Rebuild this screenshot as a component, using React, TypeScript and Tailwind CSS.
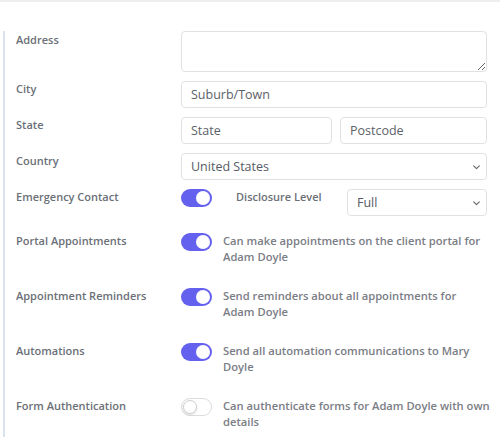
import React from "react";

const Chevron: React.FC = () => (
  <svg
    className="pointer-events-none absolute right-[6px] top-1/2 h-[9px] w-[9px] -translate-y-1/2 text-[#666]"
    viewBox="0 0 16 16"
    fill="none"
    stroke="currentColor"
    strokeWidth={2}
    strokeLinecap="round"
    strokeLinejoin="round"
  >
    <path d="M3 6l5 5 5-5" />
  </svg>
);

const Toggle: React.FC<{ on?: boolean }> = ({ on = false }) => (
  <div
    className={
      on
        ? "relative h-[18px] w-[31px] shrink-0 rounded-full bg-[#6461ef]"
        : "relative h-[18px] w-[31px] shrink-0 rounded-full border border-[#dcdcdc] bg-white"
    }
  >
    <div
      className={
        on
          ? "absolute right-[2px] top-[2px] h-[14px] w-[14px] rounded-full bg-white"
          : "absolute left-[1px] top-[1px] h-[14px] w-[14px] rounded-full border border-[#cfcfcf] bg-white shadow-sm"
      }
    />
  </div>
);

const baseInput =
  "block h-[27px] min-w-0 rounded-[4px] border border-[#dfe1e4] bg-white px-[9px] text-[12.5px] leading-[16px] text-[#555b63] placeholder:text-[#5c6168] outline-none";

const Label: React.FC<{ children: React.ReactNode }> = ({ children }) => (
  <div className="text-[11px] font-semibold leading-[16px] text-[#6b7077]">{children}</div>
);

const ToggleRow: React.FC<{ label: string; on?: boolean; lines: string[] }> = ({ label, on, lines }) => (
  <div className="grid grid-cols-[165px_1fr]">
    <Label>{label}</Label>
    <div className="flex items-start gap-[11px]">
      <Toggle on={on} />
      <div className="text-[11.2px] font-semibold leading-[16px] text-[#7a7d85]">
        {lines.map((l) => (
          <div key={l} className="whitespace-nowrap">
            {l}
          </div>
        ))}
      </div>
    </div>
  </div>
);

const App: React.FC = () => {
  return (
    <div
      className="min-h-[437px] w-[500px] bg-white"
      style={{ fontFamily: '"Open Sans", "Noto Sans", sans-serif' }}
    >
      <div className="h-[2px] w-full bg-[#eeeeee]" />
      <div className="ml-[3px] mt-[29px] border-l-2 border-[#dbe3ec] pb-[20px] pl-[11px] pr-[13px]">
        {/* Address block */}
        <div className="flex flex-col gap-[9px]">
          <div className="grid grid-cols-[165px_1fr]">
            <div className="pt-[1px]">
              <Label>Address</Label>
            </div>
            <textarea className="block h-[41px] w-full resize-y rounded-[4px] border border-[#dfe1e4] bg-white px-[9px] text-[12.5px] outline-none" />
          </div>
          <div className="grid grid-cols-[165px_1fr]">
            <Label>City</Label>
            <input className={baseInput + " w-full"} placeholder="Suburb/Town" />
          </div>
          <div className="grid grid-cols-[165px_1fr]">
            <Label>State</Label>
            <div className="flex min-w-0 gap-[8px]">
              <input className={baseInput + " w-[151px] shrink-0"} placeholder="State" />
              <input className={baseInput + " flex-1"} placeholder="Postcode" />
            </div>
          </div>
          <div className="grid grid-cols-[165px_1fr]">
            <Label>Country</Label>
            <div className="relative h-[27px]">
              <select className={baseInput + " w-full appearance-none"} defaultValue="us">
                <option value="us">United States</option>
              </select>
              <Chevron />
            </div>
          </div>
          <div className="grid grid-cols-[165px_1fr]">
            <Label>Emergency Contact</Label>
            <div className="flex items-start">
              <Toggle on />
              <div className="ml-[24px] w-[111px] shrink-0">
                <Label>Disclosure Level</Label>
              </div>
              <div className="relative h-[27px] min-w-0 flex-1">
                <select className={baseInput + " w-full appearance-none"} defaultValue="full">
                  <option value="full">Full</option>
                </select>
                <Chevron />
              </div>
            </div>
          </div>
        </div>

        {/* Toggles */}
        <div className="mt-[17px] flex flex-col gap-[23px]">
          <ToggleRow
            label="Portal Appointments"
            on
            lines={["Can make appointments on the client portal for", "Adam Doyle"]}
          />
          <ToggleRow
            label="Appointment Reminders"
            on
            lines={["Send reminders about all appointments for", "Adam Doyle"]}
          />
          <ToggleRow
            label="Automations"
            on
            lines={["Send all automation communications to Mary", "Doyle"]}
          />
          <ToggleRow
            label="Form Authentication"
            lines={["Can authenticate forms for Adam Doyle with own", "details"]}
          />
        </div>
      </div>
    </div>
  );
};

export default App;
